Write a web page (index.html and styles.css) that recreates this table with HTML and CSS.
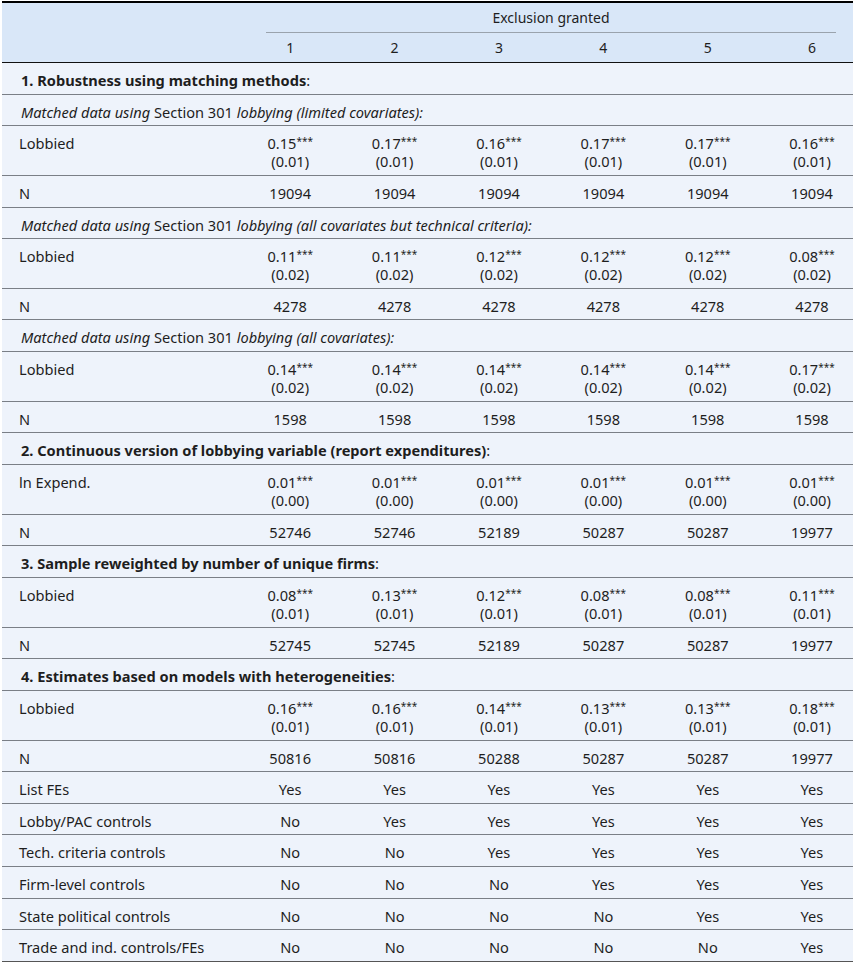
FILE: index.html
```html
<!DOCTYPE html>
<html lang="en">
<head>
  <meta charset="UTF-8" />
  <title>Exclusion granted – robustness</title>
  <link rel="stylesheet" href="styles.css" />
</head>
<body>

  <table class="results">
    <colgroup>
      <col class="col-label" />
      <col class="col-num" />
      <col class="col-num" />
      <col class="col-num" />
      <col class="col-num" />
      <col class="col-num" />
      <col class="col-last" />
    </colgroup>
    <thead>
      <tr class="head-top">
        <th></th>
        <th colspan="6"><div class="spanner">Exclusion granted</div></th>
      </tr>
      <tr class="head-nums">
        <th></th>
        <th>1</th><th>2</th><th>3</th><th>4</th><th>5</th><th>6</th>
      </tr>
    </thead>
    <tbody>
      <!-- 1. マッチング -->
      <tr class="section">
        <td colspan="7"><b>1. Robustness using matching methods</b>:</td>
      </tr>
      <tr class="sub">
        <td colspan="7"><i>Matched data using</i> Section 301 <i>lobbying (limited covariates):</i></td>
      </tr>
      <tr>
        <td>Lobbied</td>
        <td>0.15<sup>***</sup><br>(0.01)</td>
        <td>0.17<sup>***</sup><br>(0.01)</td>
        <td>0.16<sup>***</sup><br>(0.01)</td>
        <td>0.17<sup>***</sup><br>(0.01)</td>
        <td>0.17<sup>***</sup><br>(0.01)</td>
        <td>0.16<sup>***</sup><br>(0.01)</td>
      </tr>
      <tr>
        <td>N</td>
        <td>19094</td><td>19094</td><td>19094</td><td>19094</td><td>19094</td><td>19094</td>
      </tr>
      <tr class="sub">
        <td colspan="7"><i>Matched data using</i> Section 301 <i>lobbying (all covariates but technical criteria):</i></td>
      </tr>
      <tr>
        <td>Lobbied</td>
        <td>0.11<sup>***</sup><br>(0.02)</td>
        <td>0.11<sup>***</sup><br>(0.02)</td>
        <td>0.12<sup>***</sup><br>(0.02)</td>
        <td>0.12<sup>***</sup><br>(0.02)</td>
        <td>0.12<sup>***</sup><br>(0.02)</td>
        <td>0.08<sup>***</sup><br>(0.02)</td>
      </tr>
      <tr>
        <td>N</td>
        <td>4278</td><td>4278</td><td>4278</td><td>4278</td><td>4278</td><td>4278</td>
      </tr>
      <tr class="sub">
        <td colspan="7"><i>Matched data using</i> Section 301 <i>lobbying (all covariates):</i></td>
      </tr>
      <tr>
        <td>Lobbied</td>
        <td>0.14<sup>***</sup><br>(0.02)</td>
        <td>0.14<sup>***</sup><br>(0.02)</td>
        <td>0.14<sup>***</sup><br>(0.02)</td>
        <td>0.14<sup>***</sup><br>(0.02)</td>
        <td>0.14<sup>***</sup><br>(0.02)</td>
        <td>0.17<sup>***</sup><br>(0.02)</td>
      </tr>
      <tr>
        <td>N</td>
        <td>1598</td><td>1598</td><td>1598</td><td>1598</td><td>1598</td><td>1598</td>
      </tr>

      <!-- 2. 連続変数 -->
      <tr class="section">
        <td colspan="7"><b>2. Continuous version of lobbying variable (report expenditures)</b>:</td>
      </tr>
      <tr>
        <td>ln Expend.</td>
        <td>0.01<sup>***</sup><br>(0.00)</td>
        <td>0.01<sup>***</sup><br>(0.00)</td>
        <td>0.01<sup>***</sup><br>(0.00)</td>
        <td>0.01<sup>***</sup><br>(0.00)</td>
        <td>0.01<sup>***</sup><br>(0.00)</td>
        <td>0.01<sup>***</sup><br>(0.00)</td>
      </tr>
      <tr>
        <td>N</td>
        <td>52746</td><td>52746</td><td>52189</td><td>50287</td><td>50287</td><td>19977</td>
      </tr>

      <!-- 3. 再重み付け -->
      <tr class="section">
        <td colspan="7"><b>3. Sample reweighted by number of unique firms</b>:</td>
      </tr>
      <tr>
        <td>Lobbied</td>
        <td>0.08<sup>***</sup><br>(0.01)</td>
        <td>0.13<sup>***</sup><br>(0.01)</td>
        <td>0.12<sup>***</sup><br>(0.01)</td>
        <td>0.08<sup>***</sup><br>(0.01)</td>
        <td>0.08<sup>***</sup><br>(0.01)</td>
        <td>0.11<sup>***</sup><br>(0.01)</td>
      </tr>
      <tr>
        <td>N</td>
        <td>52745</td><td>52745</td><td>52189</td><td>50287</td><td>50287</td><td>19977</td>
      </tr>

      <!-- 4. 異質性 -->
      <tr class="section">
        <td colspan="7"><b>4. Estimates based on models with heterogeneities</b>:</td>
      </tr>
      <tr>
        <td>Lobbied</td>
        <td>0.16<sup>***</sup><br>(0.01)</td>
        <td>0.16<sup>***</sup><br>(0.01)</td>
        <td>0.14<sup>***</sup><br>(0.01)</td>
        <td>0.13<sup>***</sup><br>(0.01)</td>
        <td>0.13<sup>***</sup><br>(0.01)</td>
        <td>0.18<sup>***</sup><br>(0.01)</td>
      </tr>
      <tr>
        <td>N</td>
        <td>50816</td><td>50816</td><td>50288</td><td>50287</td><td>50287</td><td>19977</td>
      </tr>

      <!-- コントロール -->
      <tr>
        <td>List FEs</td>
        <td>Yes</td><td>Yes</td><td>Yes</td><td>Yes</td><td>Yes</td><td>Yes</td>
      </tr>
      <tr>
        <td>Lobby/PAC controls</td>
        <td>No</td><td>Yes</td><td>Yes</td><td>Yes</td><td>Yes</td><td>Yes</td>
      </tr>
      <tr>
        <td>Tech. criteria controls</td>
        <td>No</td><td>No</td><td>Yes</td><td>Yes</td><td>Yes</td><td>Yes</td>
      </tr>
      <tr>
        <td>Firm-level controls</td>
        <td>No</td><td>No</td><td>No</td><td>Yes</td><td>Yes</td><td>Yes</td>
      </tr>
      <tr>
        <td>State political controls</td>
        <td>No</td><td>No</td><td>No</td><td>No</td><td>Yes</td><td>Yes</td>
      </tr>
      <tr>
        <td>Trade and ind. controls/FEs</td>
        <td>No</td><td>No</td><td>No</td><td>No</td><td>No</td><td>Yes</td>
      </tr>
    </tbody>
  </table>

</body>
</html>
```

FILE: styles.css
```css
/* 基本設定 */
body {
  margin: 0;
  padding: 1px 0 0 2px;
  background-color: #fff;
  font-family: "Noto Sans", "Open Sans", sans-serif;
  font-size: 14.6px;
  color: #1e1e1e;
}

/* テーブル */
.results {
  width: 851px;
  table-layout: fixed;
  border-collapse: collapse;
  border-top: 2px solid #000;
  border-bottom: 1px solid #555;
  background-color: #eef3fb;
  line-height: 18px;
}

.col-label { width: 236px; }
.col-num { width: 104.4px; }
.col-last { width: 93px; }

.results th,
.results td {
  padding: 8px 8px 4.65px;
  text-align: center;
  vertical-align: top;
  font-weight: normal;
}

.results td:first-child {
  text-align: left;
  padding-left: 17px;
}

.results td:last-child,
.results th:last-child {
  padding-left: 19px;
  padding-right: 8px;
}

.results tbody tr {
  border-top: 1px solid #7a7f86;
}

.results tbody tr:first-child {
  border-top: 1.5px solid #111;
}

/* ヘッダー */
.results thead {
  background-color: #d9e7f8;
  font-size: 14px;
}

.head-top th {
  padding: 6px 0 0;
  height: 24px;
}

.head-top th:last-child {
  padding: 6px 0 0;
}

.spanner {
  margin: 0 17px 0 28px;
  padding-bottom: 5px;
  border-bottom: 1px solid #9aa3ad;
}

.head-nums th {
  padding-top: 6px;
  padding-bottom: 5px;
}

/* セクション見出し */
.section td,
.sub td {
  text-align: left !important;
  padding-left: 17px;
}

.section b {
  font-weight: 700;
}

sup {
  font-size: 10px;
  line-height: 0;
  vertical-align: 4px;
}
```
